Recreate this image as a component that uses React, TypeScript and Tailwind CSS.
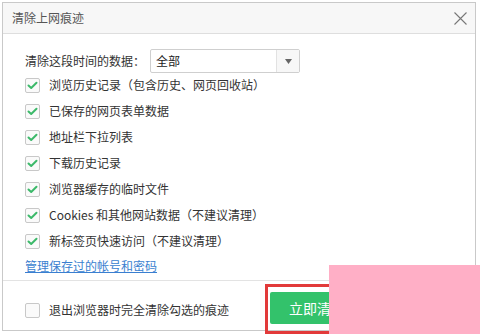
import React from "react";

function P({ c }: { c: string }) {
  return <span className="inline-block w-[12px] text-center">{c}</span>;
}

const items: React.ReactNode[] = [
  <>浏览历史记录<P c="（" />包含历史、网页回收站<P c="）" /></>,
  <>已保存的网页表单数据</>,
  <>地址栏下拉列表</>,
  <>下载历史记录</>,
  <>浏览器缓存的临时文件</>,
  <>Cookies 和其他网站数据<P c="（" />不建议清理<P c="）" /></>,
  <>新标签页快速访问<P c="（" />不建议清理<P c="）" /></>,
];

function Box({ checked }: { checked: boolean }) {
  return (
    <span className="w-[15px] h-[15px] border border-[#c8c8c8] rounded-[2px] bg-[#fafafa] flex items-center justify-center shrink-0">
      {checked && (
        <svg width="11" height="9" viewBox="0 0 11 9">
          <path d="M1.5 4.5 L4.2 7 L9.5 1.8" fill="none" stroke="#3cb96a" strokeWidth="2" strokeLinecap="round" strokeLinejoin="round" />
        </svg>
      )}
    </span>
  );
}

export default function App() {
  return (
    <div
      className="w-[480px] h-[334px] bg-white relative overflow-hidden text-[12px] text-[#333] [text-spacing-trim:space-all]"
      style={{ fontFamily: '"Noto Sans CJK SC", "Microsoft YaHei", sans-serif' }}
    >
      <div className="ml-[2px] mt-[2px] w-[474px] h-[329px] border border-[#c9c9c9] flex flex-col">
        <div className="h-[31px] bg-[#f7f7f7] border-b border-[#dedede] flex items-center justify-between pl-[9px] pr-[8px] text-[#555]">
          <span>清除上网痕迹</span>
          <svg width="13" height="13" viewBox="0 0 13 13">
            <path d="M0.5 0.5 L12.5 12.5 M12.5 0.5 L0.5 12.5" stroke="#777" strokeWidth="1.1" />
          </svg>
        </div>
        <div className="flex flex-col pl-[22px] flex-1">
          <div className="flex items-center mt-[15px] h-[24px]">
            <span className="w-[125px]">清除这段时间的数据：</span>
            <div className="w-[150px] h-[24px] border border-[#cfcfcf] rounded-[2px] flex bg-white">
              <span className="flex-1 flex items-center pl-[5px] text-[#222]">全部</span>
              <span className="w-[23px] border-l border-[#e2e2e2] bg-[#f7f7f7] flex items-center justify-center">
                <svg width="7" height="5" viewBox="0 0 7 5">
                  <path d="M0 0 L7 0 L3.5 5 Z" fill="#666" />
                </svg>
              </span>
            </div>
          </div>
          <div className="flex flex-col -mt-[1px]">
            {items.map((t, i) => (
              <div key={i} className="h-[26px] flex items-center gap-[9px]">
                <Box checked />
                <span>{t}</span>
              </div>
            ))}
          </div>
          <div className="h-[24px] flex items-center">
            <span className="text-[#3a7fd0] underline">管理保存过的帐号和密码</span>
          </div>
        </div>
        <div className="h-[50px] border-t border-[#e3e3e3] flex items-start">
          <div className="flex items-center gap-[9px] pl-[22px] mt-[20px]">
            <Box checked={false} />
            <span>退出浏览器时完全清除勾选的痕迹</span>
          </div>
          <div className="ml-auto mr-[100px] mt-[3px] border-[3px] border-[#e23a3a] pl-[2px] pr-[2px] pt-[5px] pb-[7px]">
            <div className="w-[100px] h-[32px] bg-[#33c26b] rounded-[2px] text-white text-[14px] flex items-center pl-[19px]">
              立即清理
            </div>
          </div>
        </div>
      </div>
      <div className="absolute left-[329px] top-[265px] w-[151px] h-[69px] bg-[#ffafc6]" />
    </div>
  );
}
